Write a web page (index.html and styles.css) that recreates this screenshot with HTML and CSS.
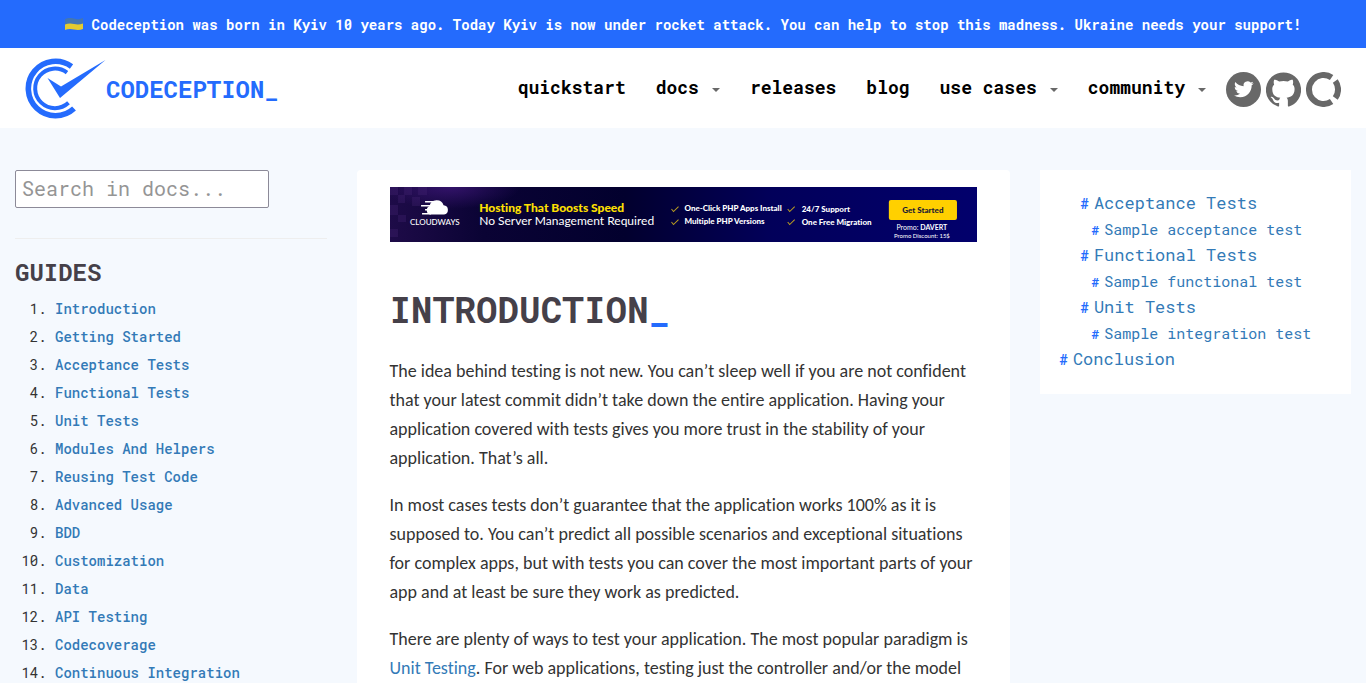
FILE: index.html
```html
<!DOCTYPE html>
<html lang="en">
<head>
<meta charset="utf-8">
<title>Introduction - Codeception</title>
<link rel="stylesheet" href="styles.css">
</head>
<body>
<div class="notice">
  <svg class="flag" viewBox="0 0 18 14" aria-hidden="true">
    <path fill="#4276b4" d="M0 1Q4-1 9 .500T18 0V6Q14 7.500 9 6.500T0 7Z"/>
    <path fill="#e3cb30" d="M0 6.500Q4 5 9 6T18 5.500V11Q14 12.500 9 11.500T0 12Z"/>
  </svg>
  <span>Codeception was born in Kyiv 10 years ago. Today Kyiv is now under rocket attack. You can help to stop this madness. Ukraine needs your support!</span>
</div>
<header class="header">
  <a class="brand" href="#">
    <svg class="brand-mark" viewBox="0 0 82 62" aria-hidden="true">
      <g fill="none" stroke="#246bfd">
        <path stroke-width="5.600" d="M47.500 8.500A27.200 27.200 0 1 0 50 50.500"/>
        <path stroke-width="4" d="M43 14.600A19.800 19.800 0 1 0 44.500 44.800"/>
      </g>
      <path fill="#246bfd" d="M23.500 20 37 28.500 81.500 2 36 40Z"/>
    </svg>
    <span>CODECEPTION_</span>
  </a>
  <nav class="nav">
    <a href="#">quickstart</a>
    <a href="#">docs<i class="caret"></i></a>
    <a href="#">releases</a>
    <a href="#">blog</a>
    <a href="#">use cases<i class="caret"></i></a>
    <a href="#">community<i class="caret"></i></a>
    <div class="social">
      <a href="#" aria-label="Twitter"><svg viewBox="0 0 35 35"><circle cx="17.500" cy="17.500" r="17.500" fill="#686868"/><path fill="#fff" transform="translate(8 7.500) scale(.82)" d="M23.950 4.570a10 10 0 0 1-2.820.770 4.960 4.960 0 0 0 2.160-2.720c-.950.550-2 .950-3.130 1.180a4.920 4.920 0 0 0-8.380 4.480C7.690 8.090 4.070 6.130 1.640 3.160a4.820 4.820 0 0 0-.670 2.480c0 1.710.870 3.210 2.190 4.100a4.900 4.900 0 0 1-2.230-.620v.060a4.920 4.920 0 0 0 3.950 4.830 5 5 0 0 1-2.210.080 4.940 4.940 0 0 0 4.600 3.420A9.870 9.870 0 0 1 0 19.540a13.990 13.990 0 0 0 7.550 2.210c9.050 0 14-7.500 14-13.980 0-.210 0-.420-.020-.630a9.940 9.940 0 0 0 2.460-2.550z"/></svg></a>
      <a href="#" aria-label="GitHub"><svg viewBox="0 0 24 24"><path fill="#686868" d="M12 .3a12 12 0 0 0-3.800 23.400c.6.100.8-.3.800-.6v-2c-3.300.7-4-1.600-4-1.600-.6-1.400-1.400-1.800-1.400-1.800-1-.7.100-.7.100-.7 1.200 0 1.900 1.200 1.900 1.200 1 1.800 2.800 1.300 3.500 1 0-.8.400-1.300.7-1.600-2.700-.3-5.500-1.300-5.500-6 0-1.200.5-2.300 1.300-3.100-.2-.4-.6-1.600 0-3.200 0 0 1-.3 3.400 1.200a11.500 11.500 0 0 1 6 0c2.300-1.500 3.300-1.200 3.300-1.200.6 1.600.2 2.800 0 3.200.9.800 1.300 1.900 1.300 3.200 0 4.600-2.800 5.600-5.500 5.900.5.400.9 1 .9 2.200v3.300c0 .3.100.7.800.6A12 12 0 0 0 12 .3"/></svg></a>
      <a href="#" aria-label="Open Collective"><svg viewBox="0 0 35 35"><g fill="none" stroke="#686868" stroke-width="6"><path d="M25.600 5.500A14.500 14.500 0 1 0 25.600 29.500"/><path d="M29.300 9A14.500 14.500 0 0 1 29.300 26"/></g></svg></a>
    </div>
  </nav>
</header>
<div class="layout">
  <aside class="sidebar">
    <input class="search" type="search" placeholder="Search in docs..." aria-label="Search in docs">
    <hr class="rule">
    <h2 class="side-title">GUIDES</h2>
    <ol class="guides">
      <li><a href="#">Introduction</a></li>
      <li><a href="#">Getting Started</a></li>
      <li><a href="#">Acceptance Tests</a></li>
      <li><a href="#">Functional Tests</a></li>
      <li><a href="#">Unit Tests</a></li>
      <li><a href="#">Modules And Helpers</a></li>
      <li><a href="#">Reusing Test Code</a></li>
      <li><a href="#">Advanced Usage</a></li>
      <li><a href="#">BDD</a></li>
      <li><a href="#">Customization</a></li>
      <li><a href="#">Data</a></li>
      <li><a href="#">API Testing</a></li>
      <li><a href="#">Codecoverage</a></li>
      <li><a href="#">Continuous Integration</a></li>
    </ol>
  </aside>
  <main class="article">
    <a class="promo" href="#">
      <svg viewBox="0 0 586 55">
        <defs>
          <linearGradient id="promo-bg"><stop offset="0" stop-color="#1e0b48"/><stop offset=".16" stop-color="#0a0334"/><stop offset=".4" stop-color="#02002e"/><stop offset=".65" stop-color="#02005a"/><stop offset="1" stop-color="#02006c"/></linearGradient>
          <radialGradient id="promo-glow"><stop offset="0" stop-color="#3b1675" stop-opacity=".8"/><stop offset="1" stop-color="#3b1675" stop-opacity="0"/></radialGradient>
        </defs>
        <rect width="586" height="55" fill="url(#promo-bg)"/>
        <ellipse cx="60" cy="0" rx="70" ry="22" fill="url(#promo-glow)"/>
        <g fill="#4a2878" opacity=".3"><path d="M0 0h8v8H0zM14 0h8v8h-8zM28 0h9v8h-9zM8 8h7v8H8zM0 18h8v10H0zM22 10h8v9h-8zM8 28h8v7H8zM0 42h8v8H0z"/></g>
        <g fill="#fff"><path d="M40 27.500a4.500 4.500 0 0 1-.5-8.500 7.300 7.300 0 0 1 14-.800 4.700 4.700 0 0 1 .5 9.300z"/><path d="M35 14h9v1.400h-9zM31 18h9v1.400h-9zM35 22h6v1.400h-6zM32 26h9v1.400h-9z"/></g>
        <g class="promo-text">
          <text class="promo-logo" x="20" y="38">CLOUDWAYS</text>
          <text class="promo-head" x="89" y="25">Hosting That Boosts Speed</text>
          <text class="promo-sub" x="89" y="38">No Server Management Required</text>
          <text class="promo-point" x="294" y="24">One-Click PHP Apps Install</text>
          <text class="promo-point" x="294" y="37">Multiple PHP Versions</text>
          <text class="promo-point" x="411" y="25">24/7 Support</text>
          <text class="promo-point" x="411" y="38">One Free Migration</text>
        </g>
        <path fill="none" stroke="#b99b20" d="m281 22 2 2.500 5-5M281 35l2 2.500 5-5M397 22l2 2.500 5-5M397 35l2 2.500 5-5"/>
        <rect x="498" y="13" width="68" height="20" rx="2" fill="#ffd000"/>
        <g class="promo-text" text-anchor="middle">
          <text class="promo-button" x="532" y="26">Get Started</text>
          <text class="promo-code" x="531" y="43">Promo: <tspan class="strong">DAVERT</tspan></text>
          <text class="promo-code small" x="531" y="51">Promo Discount: 15$</text>
        </g>
      </svg>
    </a>
    <h1 class="title">INTRODUCTION<span>_</span></h1>
    <p>The idea behind testing is not new. You can’t sleep well if you are not confident that your latest commit didn’t take down the entire application. Having your application covered with tests gives you more trust in the stability of your application. That’s all.</p>
    <p>In most cases tests don’t guarantee that the application works 100% as it is supposed to. You can’t predict all possible scenarios and exceptional situations for complex apps, but with tests you can cover the most important parts of your app and at least be sure they work as predicted.</p>
    <p>There are plenty of ways to test your application. The most popular paradigm is <a href="#">Unit Testing</a>. For web applications, testing just the controller and/or the model</p>
  </main>
  <aside class="toc">
    <ul>
      <li class="level-2"><a href="#">Acceptance Tests</a></li>
      <li class="level-3"><a href="#">Sample acceptance test</a></li>
      <li class="level-2"><a href="#">Functional Tests</a></li>
      <li class="level-3"><a href="#">Sample functional test</a></li>
      <li class="level-2"><a href="#">Unit Tests</a></li>
      <li class="level-3"><a href="#">Sample integration test</a></li>
      <li class="level-1"><a href="#">Conclusion</a></li>
    </ul>
  </aside>
</div>
</body>
</html>
```
FILE: styles.css
```css
:root {
  --mono: "Roboto Mono", "DejaVu Sans Mono", monospace;
  --blue: #246bfd;
  --link: #337ab7;
  --ink: #454049;
}
* { box-sizing: border-box; }
html { scrollbar-width: none; }
body {
  margin: 0;
  background: #f5f9fe;
  color: #333;
  font-family: Carlito, Lato, sans-serif;
  font-size: 18px;
  line-height: 29px;
}
a { color: var(--link); text-decoration: none; }
svg { display: block; }

.notice {
  display: flex;
  align-items: center;
  justify-content: center;
  gap: 9px;
  min-height: 48px;
  padding: 2px 16px 0;
  background: var(--blue);
  color: #fff;
  font: bold 14px/20px var(--mono);
}
.flag { flex: none; width: 18px; height: 14px; }

.header {
  display: flex;
  align-items: center;
  justify-content: space-between;
  min-height: 80px;
  padding: 2px 25px 0 24px;
  background: #fff;
  font-family: var(--mono);
  font-weight: bold;
}
.brand { display: flex; align-items: center; color: var(--blue); font-size: 24px; }
.brand-mark { width: 82px; height: 62px; }
.nav { display: flex; align-items: center; font-size: 18px; }
.nav > a { display: flex; align-items: center; padding: 0 15px 3px; color: #000; }
.caret {
  margin: 5px 0 0 13px;
  border: 4px solid transparent;
  border-top-color: #686868;
  border-bottom: 0;
}
.social { display: flex; gap: 5px; padding-left: 5px; }
.social svg { width: 35px; height: 35px; }

.layout {
  display: grid;
  grid-template-columns: minmax(0, 1fr) minmax(0, 2fr) minmax(0, 1fr);
  align-items: start;
  padding-top: 42px;
}
.layout > * { margin: 0 15px; }
.sidebar { font-family: var(--mono); font-weight: 400; }
.search {
  display: block;
  width: 254px;
  height: 38px;
  padding: 0 6px 2px;
  border: 1px solid #8c8a98;
  border-radius: 2px;
  background: #fff;
  font: 20px var(--mono);
  appearance: none;
}
.search::placeholder { color: #959595; }
.rule { margin: 30px 0 19px; border: 0; border-top: 1px solid #eee; }
.side-title { margin: 0 0 9px; color: var(--ink); font-size: 24px; line-height: 28px; }
.guides { margin: 0; padding-left: 40px; font-size: 14px; line-height: 28px; }
.guides a { font-weight: 500; }

.article { padding: 17px 33px; border-radius: 4px; background: #fff; font-variant-ligatures: none; }
.promo svg { width: 100%; }
.promo-text { fill: #fff; font-family: Lato, sans-serif; }
.promo-logo { font-size: 8px; font-weight: 500; }
.promo-head { fill: #ffe000; font-size: 12px; font-weight: 900; }
.promo-sub { font-size: 12px; }
.promo-point { font-size: 8px; font-weight: 900; }
.promo-button { fill: #191833; font-size: 8px; font-weight: 900; }
.promo-code { font-size: 7px; }
.promo-code.small { font-size: 6px; }
.strong { font-weight: bold; }
.title { margin: 47px 0 28px; color: var(--ink); font: bold 36px/40px var(--mono); }
.title span { color: var(--blue); }
.article p { margin: 0 0 18px; }

.toc { padding: 20px 20px 22px; background: #fff; font-family: var(--mono); }
.toc ul { margin: 0; padding: 0; list-style: none; }
.toc li { font-size: 17px; line-height: 26px; white-space: nowrap; }
.toc li::before { content: "#"; margin-right: 5px; color: var(--blue); font-size: 14px; line-height: 1; font-weight: bold; }
.toc .level-2 { padding-left: 21px; }
.toc .level-3 { padding-left: 32px; font-size: 15px; }
.toc .level-3::before { font-size: 13px; }
```
